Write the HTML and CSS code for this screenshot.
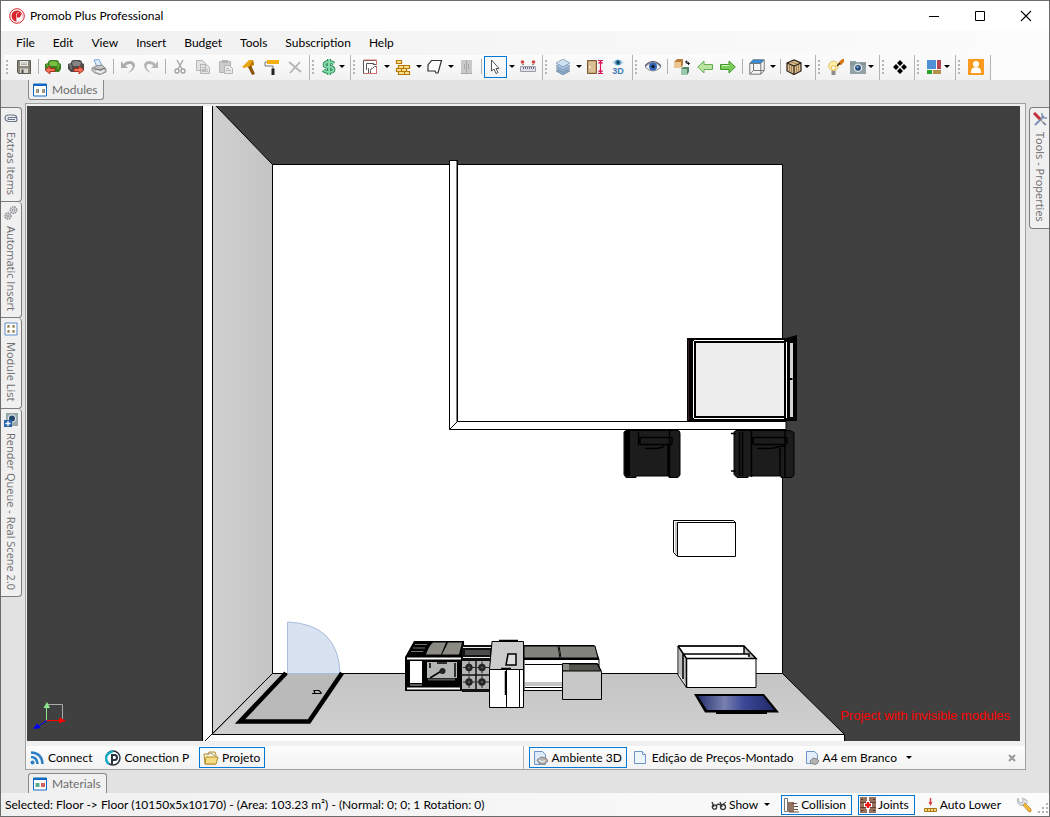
FILE: index.html
```html
<!DOCTYPE html>
<html lang="en">
<head>
  <meta charset="utf-8">
  <meta name="viewport" content="width=device-width, initial-scale=1">
  <title>Promob Plus Professional</title>
  <link rel="stylesheet" href="styles.css">
</head>
<body>
<div class="window">
  <header class="titlebar">
    <svg class="logo" viewBox="0 0 16 16"><circle cx="8" cy="8" r="7.300" fill="#fff" stroke="#d8232a"/><circle cx="8" cy="8" r="5.500" fill="#d8232a"/><path d="M8 14V9.500h2.500q1.500-1 1.500-3L11 4l2.500 4-1 4z" fill="#fff"/><path d="M7.500 13.500V6q.5-1.500 2.500-1.500" stroke="#f3b0b2" fill="none"/></svg>
    <h1>Promob Plus Professional</h1>
    <div class="controls">
      <button aria-label="Minimize"><svg viewBox="0 0 10 10"><path d="M0 5.500h10" stroke="#000"/></svg></button>
      <button aria-label="Maximize"><svg viewBox="0 0 10 10"><path d="M.5.5h9v9h-9z" fill="none" stroke="#000"/></svg></button>
      <button aria-label="Close"><svg viewBox="0 0 10 10"><path d="M0 0l10 10M10 0L0 10" stroke="#000" stroke-width="1.100"/></svg></button>
    </div>
  </header>

  <nav class="menu">
    <button>File</button>
    <button>Edit</button>
    <button>View</button>
    <button>Insert</button>
    <button>Budget</button>
    <button>Tools</button>
    <button>Subscription</button>
    <button>Help</button>
  </nav>

  <div class="toolbar">
    <div class="group">
      <span class="grip"></span>
      <button class="tool" aria-label="Save"><svg viewBox="0 0 16 16"><path d="M1.500 1.500h13v13h-12l-1-1z" fill="#8a867c" stroke="#5c5a54"/><path d="M4 2h8v5H4z" fill="#eef0e6"/><path d="M5 4h6M5 5.500h6" stroke="#a9aaa0"/><path d="M4 9.500h8V14H4z" fill="#d5d5cf"/><path d="M5.500 10.500h2V14h-2z" fill="#4c4a46"/></svg></button>
      <span class="sep"></span>
      <button class="tool" aria-label="Import"><svg viewBox="0 0 16 16"><path d="M3 4q0-3 3-3h5q3 0 3 3l2 1v5l-2 3H3l-3-3V5z" fill="#3c7d1e"/><path d="M4 3.500Q5 2 8 2t5 1.500L12 7H5z" fill="#79bd43"/><path d="M1 6h2v4M15 6h-2v4" stroke="#79bd43" fill="none"/><path d="M0 11l5-4v2.500h5v3H5V15z" fill="#f0705a" stroke="#a82417" stroke-width=".8"/></svg></button>
      <button class="tool" aria-label="Export"><svg viewBox="0 0 16 16"><path d="M3 4q0-3 3-3h5q3 0 3 3l2 1v5l-2 3H3l-3-3V5z" fill="#4c4c4c"/><path d="M4 3.500Q5 2 8 2t5 1.500L12 7H5z" fill="#858585"/><path d="M1 6h2v4" stroke="#8c8c8c" fill="none"/><path d="M16 11l-5-4v2.500H6v3h5V15z" fill="#f0705a" stroke="#a82417" stroke-width=".8"/></svg></button>
      <button class="tool" aria-label="Print"><svg viewBox="0 0 16 16"><path d="M3 1l5-.5 3 6-5 1.500z" fill="#dbeafb" stroke="#7ba4d8"/><path d="M1 9l4-2 6-1 4 4v3l-6 2.500-6-2-2-2z" fill="#c4c4c4" stroke="#8a8a8a"/><path d="M3 9.500l6 1.500 5-2" stroke="#666" fill="none"/><path d="M5 12l5 1.500 3-2" stroke="#f5f5f5" stroke-width="1.500" fill="none"/></svg></button>
      <span class="sep"></span>
      <button class="tool" aria-label="Undo" disabled><svg viewBox="0 0 16 16"><path d="M1 2v7h7l-2.500-2.500Q8 4.500 11 5q3 2 0 6l-3 3q7-3 7-8-1-4-5-4-4 0-6.500 3z" fill="#adadad"/></svg></button>
      <button class="tool" aria-label="Redo" disabled><svg viewBox="0 0 16 16"><path d="M15 2v7H8l2.500-2.500Q8 4.500 5 5q-3 2 0 6l3 3Q1 11 1 6q1-4 5-4 4 0 6.500 3z" fill="#b5b5b5"/></svg></button>
      <span class="sep"></span>
      <button class="tool" aria-label="Cut" disabled><svg viewBox="0 0 16 16"><path d="M5 1l5 9M11 1l-5 9" stroke="#aaa" stroke-width="1.500"/><circle cx="5" cy="12" r="2" fill="none" stroke="#a2a2a2" stroke-width="1.400"/><circle cx="11" cy="12" r="2" fill="none" stroke="#a2a2a2" stroke-width="1.400"/></svg></button>
      <button class="tool" aria-label="Copy" disabled><svg viewBox="0 0 16 16"><path d="M1.500 1.500h6l3 3v7h-9zM5.500 5.500h6l3 3v6h-9z" fill="#e3e3e3" stroke="#b4b4b4"/><path d="M7 8.500h4M7 10.500h6M7 12.500h6" stroke="#bbb"/></svg></button>
      <button class="tool" aria-label="Paste" disabled><svg viewBox="0 0 16 16"><path d="M1.500 2.500h11v11h-11z" fill="#ccc" stroke="#b4b4b4"/><path d="M4 1h6v3H4z" fill="#b4b4b4"/><path d="M6.500 6.500h5l3 3v5h-8z" fill="#e8e8e8" stroke="#b4b4b4"/><path d="M8 9.500h3M8 11.500h5" stroke="#bbb"/></svg></button>
      <button class="tool" aria-label="Hammer"><svg viewBox="0 0 16 16"><path d="M1 8l7-7h4l1 5-3 2-2 1-2-1-3 1z" fill="#eaa514"/><path d="M7 8l3-2 4 9-3 1z" fill="#8a5610"/><path d="M9 6l3-5 1 5z" fill="#b87608"/></svg></button>
      <button class="tool" aria-label="Paint roller"><svg viewBox="0 0 16 16"><path d="M3 1h12v4H3z" fill="#f2ae12"/><path d="M3 3H1v4h8v3" fill="none" stroke="#777"/><path d="M7.500 9.500h3V16h-3z" fill="#222"/></svg></button>
      <button class="tool" aria-label="Delete" disabled><svg viewBox="0 0 16 16"><path d="M2 3l12 10M13 3L3 14" stroke="#b5b5b5" stroke-width="1.800"/></svg></button>
    </div>
    <div class="group">
      <span class="grip"></span>
      <button class="tool tight" aria-label="Budget"><svg viewBox="0 0 16 16"><path d="M13 4.500Q11 3 8 3 3.500 3 3.500 5.500T8 8t4.500 2.500T8 13q-4 0-5.500-2M8 0v16" fill="none" stroke="#2f8a5c" stroke-width="3.800"/><path d="M13 4.500Q11 3 8 3 3.500 3 3.500 5.500T8 8t4.500 2.500T8 13q-4 0-5.500-2M8 0v16" fill="none" stroke="#82dba8" stroke-width="2"/></svg><i class="arrow"></i></button>
    </div>
    <div class="group">
      <span class="grip"></span>
      <button class="tool" aria-label="Walls"><svg viewBox="0 0 16 16"><path d="M.5 1.500h13v4h-8v9h-5z" fill="#fff" stroke="#555"/><path d="M3.500 11V4.500H11M7.500 14.500v-3q0-2 2-2l2-2h2v7z" fill="#fff" stroke="#555"/><path d="M13.500 1v5M.5 1h13M13.500 8v6.500H1" stroke="#d46d6d" fill="none"/></svg></button>
      <button class="drop" aria-label="Wall options"><i class="arrow"></i></button>
      <button class="tool" aria-label="Bricks"><svg viewBox="0 0 16 16"><path d="M1.500 1.500h5v3h-5zM3.500 6.500h5v3h-5zM8.500 6.500h6v3h-6zM1.500 9.500h5v3h-5zM6.500 9.500h5v3h-5zM3.500 12.500h6v3h-6zM9.500 12.500h5v3h-5z" fill="#fddf90" stroke="#b87808" stroke-width="1.200"/></svg></button>
      <button class="drop" aria-label="Brick options"><i class="arrow"></i></button>
      <button class="tool" aria-label="Floor shape"><svg viewBox="0 0 16 16"><path d="M4.500 1.500h10L11 14H9l-1-2H1V6z" fill="#fafafa" stroke="#333" stroke-width="1.200"/></svg></button>
      <button class="drop" aria-label="Floor options"><i class="arrow"></i></button>
      <button class="tool" aria-label="Cabinet" disabled><svg viewBox="0 0 16 16"><path d="M2 1h11v14H2z" fill="#c9c9c9"/><path d="M7.500 1v14M5.500 5v5M9.500 5v5M2 14.500h11" stroke="#a8a8a8"/></svg></button>
      <span class="sep"></span>
      <button class="tool checked" aria-label="Select"><svg viewBox="0 0 16 16"><path d="M3.500 1v11l2.500-2 2 4.500 2-1L8 9.500h3z" fill="#fff" stroke="#555"/></svg></button>
      <button class="drop" aria-label="Select options"><i class="arrow"></i></button>
      <button class="tool" aria-label="Measure"><svg viewBox="0 0 16 16"><path d="M.5 7.500h15v5H.5z" fill="#dcdde5" stroke="#9c9fac"/><path d="M3.500 8v2M5.500 8v2M7.500 8v2M9.500 8v2M11.500 8v2M13.500 8v2" stroke="#6a6e80"/><circle cx="2.500" cy="3" r="1.800" fill="#d44"/><circle cx="13.500" cy="3" r="1.800" fill="#d44"/><path d="M2 5.500h2M12 5.500h2" stroke="#888"/></svg></button>
    </div>
    <div class="group">
      <span class="grip"></span>
      <button class="tool" aria-label="Layers"><svg viewBox="0 0 16 16"><g stroke="#5f7f9c" stroke-width=".6"><path d="M1 12l7-4 7 4-7 4z" fill="#8aa8c4"/><path d="M1 9.500l7-4 7 4-7 4z" fill="#9ab6d2"/><path d="M1 7l7-4 7 4-7 4z" fill="#a8c4e0"/><path d="M1 4l7-4 7 4-7 4z" fill="#cfe0f2"/></g></svg></button>
      <button class="drop" aria-label="Layer options"><i class="arrow"></i></button>
      <button class="tool" aria-label="Door size"><svg viewBox="0 0 16 16"><path d="M.5 1.500h9v13h-9z" fill="#c9a577" stroke="#7c5c37"/><path d="M2 3h6v10H2z" fill="#ddc196"/><path d="M2 8h1.500" stroke="#fff" stroke-width="1.500"/><path d="M11 1.500h5M11 14.500h5M13.500 2v12M11.500 4.500l2-2 2 2M11.500 11.500l2 2 2-2" fill="none" stroke="#d91656" stroke-width="1.200"/></svg></button>
      <button class="tool" aria-label="3D view"><svg viewBox="0 0 16 16"><path d="M2 3.500q6-6 12 0-6 6-12 0z" fill="#bcd4e2"/><circle cx="8" cy="3.500" r="2.800" fill="#3587b5"/><circle cx="8" cy="3.500" r="1.200" fill="#123"/><text class="tag-3d" x="8" y="15" text-anchor="middle">3D</text></svg></button>
    </div>
    <div class="group">
      <span class="grip"></span>
      <button class="tool" aria-label="View"><svg viewBox="0 0 16 16"><path d="M0 8q8-9 16 0-8 8-16 0z" fill="#f5f7fa" stroke="#889"/><circle cx="8" cy="7.500" r="4" fill="#3568b7"/><circle cx="8" cy="7.500" r="1.700" fill="#101830"/><path d="M0 7q8-9 16 0" fill="none" stroke="#556" stroke-width="1.200"/></svg></button>
      <span class="sep"></span>
      <button class="tool" aria-label="Replace module"><svg viewBox="0 0 16 16"><path d="M0 3l3-3h6v6L7 9H0z" fill="#b97c3c"/><path d="M0 3h7v6H0z" fill="#eac693"/><path d="M7 10l2-2h6v5l-2 3H7z" fill="#4f8867"/><path d="M7 10h6v6H7z" fill="#9bc8ab"/><path d="M11 3h3M12.500 1.500v3M14.500 3v3M13 4.500h3" fill="none" stroke="#222"/></svg></button>
      <button class="tool" aria-label="Previous"><svg viewBox="0 0 16 16"><path d="M.7 8L7 2v3.500h8.500v5H7V14z" fill="#b9e5a0" stroke="#65ad54"/></svg></button>
      <button class="tool" aria-label="Next"><svg viewBox="0 0 16 16"><path d="M15.300 8L9 2v3.500H.5v5H9V14z" fill="#79ce56" stroke="#43932c"/><path d="M2 6.500h7" stroke="#d4f2c4"/></svg></button>
      <span class="sep"></span>
      <button class="tool" aria-label="Top view"><svg viewBox="0 0 16 16"><path d="M.8 4.200L4 .8h11.200L12 4.200z" fill="#2f8ee5" stroke="#678"/><path d="M.8 4.500h11v10.700H.8zM15.200 1v10.500l-3.400 3.700M4.500 4.500v7H15M4.500 11.500L.8 15" fill="none" stroke="#777"/></svg></button>
      <button class="drop" aria-label="Camera side"><i class="arrow"></i></button>
      <span class="sep"></span>
      <button class="tool tight" aria-label="Textures"><svg viewBox="0 0 16 16"><path d="M1 4l7-3 7 3v8l-7 3.500L1 12z" fill="#dcbd90" stroke="#2b2118" stroke-width="1.200"/><path d="M1 4l7 3 7-3M8 7v8" fill="none" stroke="#2b2118" stroke-width="1.200"/><path d="M3.500 6v6M5.500 7v6M10.500 7v6M12.500 6v6M5 3l6 2" stroke="#a4845a"/></svg><i class="arrow"></i></button>
    </div>
    <div class="group">
      <span class="grip"></span>
      <button class="tool" aria-label="Lights"><svg viewBox="0 0 16 16"><circle cx="5.500" cy="7" r="4.800" fill="#fff0a8" stroke="#e0c468"/><path d="M4 11L3.500 7h4L7 11z" fill="#fff" stroke="#e4ae37" stroke-width=".8"/><path d="M3.500 12h4v4h-4z" fill="#8c8e94"/><path d="M10 6l1-3 3-3h2v3l-3 3z" fill="#d87818"/><path d="M9 7l3-3" stroke="#3b2a1c" stroke-width="1.500"/></svg></button>
      <button class="tool tight" aria-label="Camera"><svg viewBox="0 0 16 16"><path d="M0 2h6v1h10v12H0z" fill="#91a1a4"/><path d="M0 5h16" stroke="#768689"/><circle cx="8" cy="8.800" r="4.300" fill="#dce4e8"/><circle cx="8" cy="8.800" r="2.900" fill="#254e7b"/><circle cx="7.500" cy="8" r="1" fill="#9cc1dd"/></svg><i class="arrow"></i></button>
    </div>
    <div class="group">
      <span class="grip"></span>
      <button class="tool" aria-label="Move"><svg viewBox="0 0 16 16"><path d="M8 1l3 3-3 3-3-3zM8 9l3 3-3 3-3-3zM4 5l3 3-3 3-3-3zM12 5l3 3-3 3-3-3z" fill="#000"/></svg></button>
    </div>
    <div class="group">
      <span class="grip"></span>
      <button class="tool tight" aria-label="Layout"><svg viewBox="0 0 16 16"><path d="M1 1h9v9H1z" fill="#4f90d6"/><path d="M11 1h4v9h-4z" fill="#b64552"/><path d="M1 11h5v4H1z" fill="#28a329"/><path d="M7 11h8v4H7z" fill="#b39149"/></svg><i class="arrow"></i></button>
    </div>
    <div class="group">
      <span class="grip"></span>
      <button class="tool" aria-label="Account"><svg viewBox="0 0 16 16"><path d="M0 0h16v16H0z" fill="#fa9a1e"/><circle cx="8" cy="5" r="3" fill="#fff"/><path d="M3 14q-.5-6 5-6t5 6z" fill="#fff"/></svg></button>
    </div>
  </div>

  <div class="dock-top">
    <button class="tab tab-down"><svg viewBox="0 0 14 14"><path d="M.5 1h13v12H.5z" fill="#fff" stroke="#1268c5"/><path d="M0 2h14" stroke="#1268c5" stroke-width="2"/><path d="M3 6h2v4H3zM9 6h2v4H9z" fill="#b39b6b"/><path d="M5 6h1v4H5zM11 6h1v4h-1z" fill="#6d88a0"/></svg>Modules</button>
  </div>

  <div class="middle">
    <aside class="side side-left">
      <button class="vtab"><svg viewBox="0 0 14 14"><path d="M13 5.500Q12 3 9 3H4Q1 3.500 1 6t3 3.500h7q2 0 2-2T11 5.500H5q-1 0-1 1t1 1h6" fill="none" stroke="#65758a" stroke-width="1.100"/></svg>Extras Items</button>
      <button class="vtab"><svg viewBox="0 0 14 14"><g fill="none" stroke="#8d8d98"><circle cx="9.500" cy="4" r="3.200" stroke-width="1.600" stroke-dasharray="1.500 .7"/><circle cx="9.500" cy="4" r="1.300"/><circle cx="4" cy="10" r="3" stroke-width="1.600" stroke-dasharray="1.500 .7"/><circle cx="4" cy="10" r="1.200"/></g></svg>Automatic Insert</button>
      <button class="vtab"><svg viewBox="0 0 14 14"><path d="M1 1h12v12H1z" fill="#fff" stroke="#5d8bcc"/><path d="M3 3h3v3H3zM3 8h3v3H3zM8 3h3v3H8zM8 8h3v3H8z" fill="#c6b78c"/><path d="M4 4h1M9 4h1M4 9h1M9 9h1" stroke="#345"/></svg>Module List</button>
      <button class="vtab"><svg viewBox="0 0 14 14"><path d="M2 0h12v13H2z" fill="#98a8aa"/><circle cx="8" cy="5.500" r="4.300" fill="#dbe4e8"/><circle cx="8" cy="5.500" r="3" fill="#23496e"/><path d="M0 7h8v7H0z" fill="#2a63a6"/><path d="M4 8v5M1.500 10.500h5" stroke="#fff" stroke-width="1.300"/></svg>Render Queue - Real Scene 2.0</button>
    </aside>

    <main class="work">
      <div class="viewport">
        <svg class="scene" viewBox="27 106 993 635" preserveAspectRatio="xMidYMid slice">
          <defs>
            <linearGradient id="wall"><stop offset="0" stop-color="#d0d0d0"/><stop offset="1" stop-color="#c4c4c4"/></linearGradient>
            <linearGradient id="ground" x2="0" y2="1"><stop offset="0" stop-color="#c4c4c4"/><stop offset="1" stop-color="#d0d0d0"/></linearGradient>
            <linearGradient id="screen"><stop offset="0" stop-color="#28316e"/><stop offset=".35" stop-color="#7880b0"/><stop offset=".6" stop-color="#3c4898"/><stop offset="1" stop-color="#202a68"/></linearGradient>
          </defs>
          <!-- room shell -->
          <path d="M203 106h10v628h631.500v7H203z" fill="#fff"/>
          <path d="M213 106h3l56.500 58.500v509L213 734z" fill="url(#wall)"/>
          <path d="M272.500 673.500h510l62 61H213z" fill="url(#ground)"/>
          <path d="M272.500 164.500h510v509h-510z" fill="#fff"/>
          <g fill="none" stroke="#000">
            <path d="M202.500 106v635M212.500 106v628.500h632v7M272.500 164.500h510v509h-510z"/>
            <path d="M216 106l56.500 58.500M272.500 673.500L205 741M782.500 673.500l62 61"/>
          </g>
          <!-- inner wall -->
          <path d="M449.500 160.500h7.500v261h329v8H449.500z" fill="#fff" stroke="#000"/>
          <path d="M457.500 160v261.500M449.500 429.500l8-8" stroke="#000" fill="none"/>

          <!-- shower box -->
          <path d="M687 338h99l11-3v86H687z" fill="#000"/>
          <path d="M694 340.500h90M694 418.500h90M693.500 341v77M786.500 342v76" stroke="#fff"/>
          <path d="M696 343h88v73h-88z" fill="#ededed"/>
          <path d="M790 343h3v74h-3z" fill="#d4d4d4"/>
          <path d="M789.500 379h3" stroke="#000" stroke-width="2"/>
          <path d="M688.500 340v80" stroke="#3a2020"/>

          <!-- armchairs -->
          <g>
            <path d="M626 430.500h52q2 0 2 3V475l-2 2.500h-9V476h-33v1.500h-10l-2-3V432z" fill="#1c1c1c" stroke="#000"/>
            <path d="M625 431h5v45h-5z" fill="#000"/>
            <path d="M638.500 432v14M669.500 430v47M668 445v31M640 437.500h32M640 444.500h32M640 437v7M672 437v7M645 448.500h12l7-2" fill="none" stroke="#000" stroke-width="1.500"/>
          </g>
          <g>
            <path d="M736 430.500h54l4 2V475l-2 2.500h-11V476h-33v1.500h-11l-3-3V432z" fill="#1c1c1c" stroke="#000"/>
            <path d="M731 433.500h5M731 471h5M739.500 432v44M742.500 432v44M751.500 430v47M785 430v47M780 448v28M753 437.500h33M753 444.500h33M753 437v7M787 437v7M757 448.500h14l14-3" fill="none" stroke="#000" stroke-width="1.500"/>
          </g>

          <!-- table -->
          <path d="M673.500 520.500h60l2 2v34h-58l-4-4z" fill="#fff" stroke="#000"/>
          <path d="M675 522h3v34l-3-3z" fill="#c4c4c4"/>
          <path d="M677.500 556v-33.500h58" fill="none" stroke="#000"/>

          <!-- door and its swing -->
          <path d="M287.500 673.500V622q51 2 52.500 51.500z" fill="#d8e2f0" stroke="#a9bddb"/>
          <path d="M286 674h57l-35 47h-69z" fill="#bababa"/>
          <path d="M286 673l-46 48.500h69L342 673" fill="none" stroke="#000" stroke-width="4.500"/>
          <path d="M314 690.500h5l2 2v1h-6zM312 693.500h4" stroke="#000" stroke-width="1.200" fill="none"/>

          <!-- kitchen run: sink -->
          <path d="M405 657l9-16h50l1 50h-60z" fill="#000"/>
          <path d="M433 642.500h13l-5 12h-15q3-9 7-12zM448 642.500h14l-3 12h-17z" fill="#8b8b83"/>
          <path d="M415 644.500h12M413 648h12M411 651.500h12" stroke="#77776f"/>
          <path d="M407 658.500h54M407 688.500h53" stroke="#fff" stroke-width="2"/>
          <path d="M410 661h12v22h-12z" fill="#fff"/>
          <path d="M410 685h12" stroke="#bbb"/>
          <path d="M427 662h30v16h-30z" fill="#b2b7b5"/>
          <path d="M428 679.500h27" stroke="#555" stroke-width="2"/>
          <path d="M430 678l13-8M437 663h10M430 663v5M455 663v14" stroke="#000" stroke-width="1.500"/>
          <circle cx="442.500" cy="671" r="3" fill="#222"/>
          <!-- cooktop -->
          <path d="M462 645h30v47h-30z" fill="#111"/>
          <path d="M465 650h25v5h-25z" fill="#4c4c4c"/>
          <path d="M463 647.500h29M463 657.500h27" stroke="#eee"/>
          <path d="M462 661h28v28h-28z" fill="#b4b4b4"/>
          <path d="M476 660v30M461 675h29" stroke="#111" stroke-width="1.500"/>
          <g fill="#252525"><circle cx="469" cy="667.500" r="3.700"/><circle cx="482" cy="667.500" r="3.700"/><circle cx="469" cy="682" r="3.700"/><circle cx="482" cy="682" r="3.700"/></g>
          <path d="M463 667.500h12M477 667.500h12M463 682h12M477 682h12M469 661.500v12M482 661.500v12M469 676v12M482 676v12" stroke="#252525"/>
          <circle cx="469" cy="667.500" r="1" fill="#765"/><circle cx="482" cy="667.500" r="1" fill="#765"/><circle cx="469" cy="682" r="1" fill="#765"/><circle cx="482" cy="682" r="1" fill="#765"/>
          <!-- counter -->
          <path d="M524 645.500h70l5 14v31h-75z" fill="#fff" stroke="#000"/>
          <path d="M524 646h34l2 12h-36zM559 646h36l3 12h-37z" fill="#83837d" stroke="#000"/>
          <path d="M524 659h75" stroke="#000" stroke-width="2"/>
          <path d="M525 664.500h74M525 687.500h37" stroke="#000"/>
          <path d="M525 682h37v4h-37z" fill="#c4c4c4"/>
          <path d="M562.500 663.500h35l4 8v28h-39z" fill="#c8c8c8" stroke="#000"/>
          <path d="M563 664h34l4 7h-38z" fill="#55554f" stroke="#000"/>
          <path d="M563 664h6v6h-6z" fill="#8b8b86"/>
          <!-- fridge -->
          <path d="M492 641.500h31.500v28H489.500z" fill="#cbcbcb" stroke="#000"/>
          <path d="M489.500 669.500h34v38h-34z" fill="#fff" stroke="#000"/>
          <path d="M506.500 670v37M519.500 670v37" stroke="#000"/>
          <path d="M501 668.500h10M505.500 671v24M499 640.500h19" stroke="#000" stroke-width="1.500"/>
          <path d="M508 654h8v11h-10z" fill="#ddd" stroke="#000" stroke-width="1.500"/>

          <!-- open drawer box -->
          <path d="M678 646h66l12 12v29.500h-69.500L678 675z" fill="#fff" stroke="#000"/>
          <path d="M679 647l8 12v27l-8-12zM744 647l11 11h-5l-6-6z" fill="#bdbdbd"/>
          <path d="M678 646h66v8M744 646l12 12.500h-69.500L678 646M683 654h66v3M683 654v25M686.500 658v29.500" fill="none" stroke="#000" stroke-width="1.500"/>
          <!-- tv -->
          <path d="M694 694h70l15 18.500h-74z" fill="#000"/>
          <path d="M698 696h65l11 14h-67z" fill="url(#screen)"/>
          <path d="M716 713h51" stroke="#000" stroke-width="2"/>

          <!-- axis marker -->
          <path d="M47 704.500h15.500v16" fill="none" stroke="#aaa"/>
          <path d="M46.500 721v-14" stroke="#8ee98e"/>
          <path d="M43.500 708l3.500-6 3 6z" fill="#8ee98e"/>
          <path d="M47 720.500h14" stroke="#f00"/>
          <path d="M59 717.500l7 3-7 3z" fill="#f00"/>
          <path d="M47 720.500l-9 6" stroke="#00f"/>
          <path d="M33 729l4-5.500 3.500 4.500z" fill="#00f"/>
        </svg>
        <p class="warning">Project with invisible modules</p>
      </div>

      <div class="docbar">
        <div class="docs docs-project">
          <button class="doc"><svg viewBox="0 0 16 16"><circle cx="3.500" cy="12.500" r="2" fill="#2f7fc6"/><path d="M2 7q6 0 6.500 7M2 2.500q11 .5 11.500 11.500" fill="none" stroke="#2f7fc6" stroke-width="2.500"/></svg>Connect</button>
          <button class="doc"><svg viewBox="0 0 16 16"><circle cx="8" cy="8" r="7" fill="#fff" stroke="#27323a" stroke-width="1.500"/><path d="M4 14Q1 12 1 8t7-7" fill="none" stroke="#19acc8" stroke-width="2.500"/><path d="M7 14V5h2.500q2.500 0 2.500 2.500T9.500 10H8" fill="none" stroke="#27323a" stroke-width="2"/></svg>Conection P</button>
          <button class="doc checked"><svg viewBox="0 0 16 16"><path d="M1 4h4l1-2h6l1 3v9H2z" fill="#fff5ce" stroke="#b08e32"/><path d="M3 7h12l-2 7H2z" fill="#f6dc80" stroke="#b08e32"/><path d="M4 5l4-2 4 3" fill="none" stroke="#999"/></svg>Projeto</button>
        </div>
        <div class="docs docs-pages">
          <button class="doc checked"><svg viewBox="0 0 16 16"><path d="M1.500 1.500h8l3 3v10h-11z" fill="#dceafa" stroke="#6e94c8"/><path d="M4 10l4-3 5 1 2 3-4 3.500-5-1z" fill="#b4b4b4" stroke="#888"/><path d="M6 10l3 2 4-2" stroke="#fff" fill="none"/><path d="M12 10h1" stroke="#b86b22"/></svg>Ambiente 3D</button>
          <button class="doc"><svg viewBox="0 0 16 16"><path d="M1.500 1.500h8l3 3v9h-11z" fill="#edf5fe" stroke="#6e94c8"/><path d="M9.500 1.500v3h3" fill="#fff" stroke="#6e94c8"/></svg>Edição de Preços-Montado</button>
          <button class="doc"><svg viewBox="0 0 16 16"><path d="M2.500 1.500h8l3 3v9h-11z" fill="#e4eefa" stroke="#6e94c8"/><path d="M6 11l3-3 4 1 2 2-3 3.500-5-1z" fill="#b3b3b3" stroke="#888"/></svg>A4 em Branco</button>
          <button class="drop" aria-label="More pages"><i class="arrow"></i></button>
          <button class="close" aria-label="Close page"><svg viewBox="0 0 8 8"><path d="M1 1l6 6M7 1L1 7" stroke="#999" stroke-width="2"/></svg></button>
        </div>
      </div>
    </main>

    <aside class="side side-right">
      <button class="vtab"><svg viewBox="0 0 14 14"><path d="M2 13L11 4" stroke="#7d91b5" stroke-width="2"/><path d="M9 1v3l2 2h3M10 10l3 3" fill="none" stroke="#7d91b5" stroke-width="1.500"/><path d="M1 1l6 6" stroke="#c52f39" stroke-width="3"/><path d="M7 7l5 6" stroke="#777"/></svg>Tools - Properties</button>
    </aside>
  </div>

  <div class="dock-bottom">
    <button class="tab tab-up"><svg viewBox="0 0 14 14"><path d="M.5 1h13v12H.5z" fill="#fff" stroke="#1268c5"/><path d="M0 2h14" stroke="#1268c5" stroke-width="2"/><path d="M2.500 6h4v4h-4z" fill="#5ba98c"/><path d="M8 6h4v4H8z" fill="#d0605f"/></svg>Materials</button>
  </div>

  <footer class="status">
    <p>Selected: Floor -&gt; Floor (10150x5x10170) - (Area: 103.23 m²) - (Normal: 0; 0; 1 Rotation: 0)</p>
    <div class="options">
      <button class="option"><svg viewBox="0 0 16 16"><path d="M1 5l2 5M9 5l2 5M5 9q2-3 4-1" fill="none" stroke="#333" stroke-width="1.300"/><circle cx="3.500" cy="10" r="2.200" fill="none" stroke="#333" stroke-width="1.300"/><circle cx="12" cy="10" r="2.500" fill="none" stroke="#333" stroke-width="1.300"/><path d="M12 7l3-2" stroke="#333"/></svg>Show<i class="arrow"></i></button>
      <button class="option checked"><svg viewBox="0 0 16 16"><path d="M1.500 1.500h3v13h-3z" fill="#fff" stroke="#777"/><path d="M5 5h6v10H5z" fill="#937462"/><path d="M9 6.500h5M11 9.500h4M11 12.500h4M6 15h10" stroke="#6b5143"/></svg>Collision</button>
      <button class="option checked"><svg viewBox="0 0 16 16"><path d="M0 0h7v16H0zM9 0h7v16H9z" fill="#98715c"/><path d="M0 5.500h16M0 10.500h16" stroke="#5c4032"/><path d="M1 2.500h2M13 2.500h2M1 13.500h2M13 13.500h2" stroke="#4c3023"/><path d="M8 4v8M4 8h8" stroke="#fff" stroke-width="4"/><path d="M8 5v6M5 8h6" stroke="#e81818" stroke-width="2.500"/></svg>Joints</button>
      <button class="option option-lower"><svg viewBox="0 0 16 16"><path d="M2.500 11.500h12v3h-12z" fill="#fbd875" stroke="#ac771b"/><path d="M5.500 12v2M8.500 12v2M11.500 12v2" stroke="#ac771b"/><path d="M8.500 1v6" stroke="#d34343" stroke-width="1.500"/><path d="M6.500 5h4L8.500 9z" fill="#d34343"/></svg>Auto Lower</button>
      <button class="wrench" aria-label="Settings"><svg viewBox="0 0 16 16"><path d="M2 1l1 4 3 1 1-3Q5 0 9 2t1 5l-2 2-4-1Q0 6 2 1z" fill="#dde0e4" stroke="#9da2a8" stroke-width=".7"/><path d="M7 8l2-2 6 6q1 3-2 3z" fill="#f8b83c" stroke="#b47c1a" stroke-width=".7"/></svg></button>
      <svg class="resize" viewBox="0 0 11 11"><path d="M8 0h2v2H8zM4 4h2v2H4zM8 4h2v2H8zM0 8h2v2H0zM4 8h2v2H4zM8 8h2v2H8z" fill="#b4b4b4"/></svg>
    </div>
  </footer>
</div>
</body>
</html>
```
FILE: styles.css
```css
* {
  box-sizing: border-box;
}
body {
  margin: 0;
  font-family: Lato, "Open Sans", sans-serif;
  font-size: 12px;
  line-height: 16px;
  color: #000;
}
button {
  margin: 0;
  padding: 0;
  border: 0;
  background: none;
  font: inherit;
  color: inherit;
  white-space: nowrap;
}
h1, p {
  margin: 0;
  font-size: 12px;
  font-weight: normal;
}
svg {
  flex: none;
  display: block;
}
.window {
  height: 100vh;
  display: flex;
  flex-direction: column;
  border: 1px solid #6b6b6b;
  background: #e2e2e2;
}

/* title bar */
.titlebar {
  height: 30px;
  display: flex;
  align-items: center;
  gap: 5px;
  padding-left: 8px;
  background: #fff;
}
.logo {
  width: 16px;
  height: 16px;
}
.controls {
  display: flex;
  margin-left: auto;
}
.controls button {
  width: 46px;
  height: 30px;
  display: flex;
  align-items: center;
  justify-content: center;
}
.controls svg {
  width: 10px;
  height: 10px;
  overflow: visible;
}

/* menu */
.menu {
  height: 24px;
  display: flex;
  align-items: center;
  padding-left: 6px;
  background: linear-gradient(90deg, #f0f0f0, #fcfcfc);
}
.menu button {
  padding: 0 9px;
}

/* toolbar */
.toolbar {
  height: 25px;
  display: flex;
  padding-left: 3px;
  background: linear-gradient(90deg, #f0f0f0, #fcfcfc);
}
.group {
  display: flex;
  align-items: center;
  padding: 0 3px 2px 0;
  border-right: 1px solid #b4b4b4;
  background: linear-gradient(#fcfcfc, #f1f1f1);
}
.grip {
  width: 8px;
  height: 14px;
  background: repeating-linear-gradient(#b5b5b5 0 2px, transparent 2px 4px) 2px 0 / 2px 14px no-repeat;
}
.sep {
  width: 1px;
  height: 15px;
  margin: 0 2px 0 3px;
  background: #b0b0b0;
}
.tool {
  width: 23px;
  height: 22px;
  display: flex;
  align-items: center;
  justify-content: center;
}
.tool svg, .doc svg, .option svg, .wrench svg {
  width: 16px;
  height: 16px;
}
.tight {
  width: 29px;
  gap: 2px;
}
.drop {
  width: 9px;
  height: 22px;
  display: flex;
  align-items: center;
  justify-content: center;
}
.arrow {
  flex: none;
  border: 3px solid transparent;
  border-top-color: #000;
  border-bottom: 0;
}
.checked {
  border: 1px solid #0078d7;
}
.tag-3d {
  font: bold 9px "Liberation Sans", sans-serif;
  fill: #3b7db4;
}

/* docked tabs */
.dock-top {
  height: 23px;
  padding-left: 27px;
}
.dock-bottom {
  height: 23px;
  padding: 3px 0 0 27px;
}
.tab {
  height: 20px;
  display: flex;
  align-items: center;
  gap: 5px;
  padding: 0 5px 0 4px;
  border: 1px solid #8a8a8a;
  background: #f0f0f0;
  color: #6d6d6d;
}
.tab svg {
  width: 14px;
  height: 14px;
}
.tab-down {
  border-top: 0;
  border-radius: 0 0 3px 3px;
}
.tab-up {
  border-bottom: 0;
  border-radius: 3px 3px 0 0;
}
.middle {
  flex: 1;
  min-height: 0;
  display: flex;
}
.side {
  width: 24px;
  padding-top: 4px;
}
.side-right {
  width: 23px;
  padding-left: 3px;
}
.vtab {
  width: 21px;
  display: flex;
  align-items: center;
  gap: 6px;
  padding: 4px 0 6px;
  writing-mode: vertical-rl;
  border: 1px solid #7d7d7d;
  border-left: 0;
  border-radius: 0 4px 4px 0;
  background: #f0f0f0;
  font-family: "Open Sans", sans-serif;
  font-size: 11px;
  color: #6d6d6d;
}
.vtab + .vtab {
  border-top: 0;
}
.vtab svg {
  width: 14px;
  height: 14px;
}
.side-right .vtab {
  width: 20px;
  border-left: 1px solid #7d7d7d;
  border-right: 0;
  border-radius: 4px 0 0 4px;
}

/* work area */
.work {
  flex: 1;
  min-width: 0;
  display: flex;
  flex-direction: column;
  border: 1px solid #a0a0a0;
  background: #f0f0f0;
}
.viewport {
  flex: 1;
  min-height: 0;
  position: relative;
  margin: 2px 5px 5px 1px;
  background: #404040;
}
.scene {
  width: 100%;
  height: 100%;
}
.warning {
  position: absolute;
  right: 10px;
  bottom: 17px;
  font-family: "Liberation Sans", Arial, sans-serif;
  font-size: 13px;
  color: #f00;
}
.docbar {
  height: 23px;
  display: flex;
}
.docs {
  flex: 1;
  display: flex;
  align-items: center;
  background: linear-gradient(#fdfdfd, #f2f2f2);
}
.docs-project {
  gap: 6px;
  border-right: 1px solid #b4b4b4;
}
.docs-pages {
  gap: 3px;
  padding-left: 5px;
}
.doc {
  height: 21px;
  display: flex;
  align-items: center;
  gap: 3px;
  padding: 0 4px 0 3px;
}
.close {
  margin: 0 9px 0 auto;
}
.close svg {
  width: 8px;
  height: 8px;
}

/* status bar */
.status {
  height: 23px;
  display: flex;
  align-items: center;
  justify-content: space-between;
  padding-left: 4px;
  background: linear-gradient(90deg, #f0f0f0, #fcfcfc);
}
.options {
  height: 23px;
  display: flex;
  align-items: center;
  gap: 6px;
}
.option {
  height: 20px;
  display: flex;
  align-items: center;
  gap: 2px;
  padding: 0 5px 0 1px;
}
.option .arrow {
  margin-left: 4px;
}
.wrench {
  margin-left: 4px;
}
.resize {
  width: 11px;
  height: 11px;
  align-self: flex-end;
  margin-bottom: 2px;
}
```
